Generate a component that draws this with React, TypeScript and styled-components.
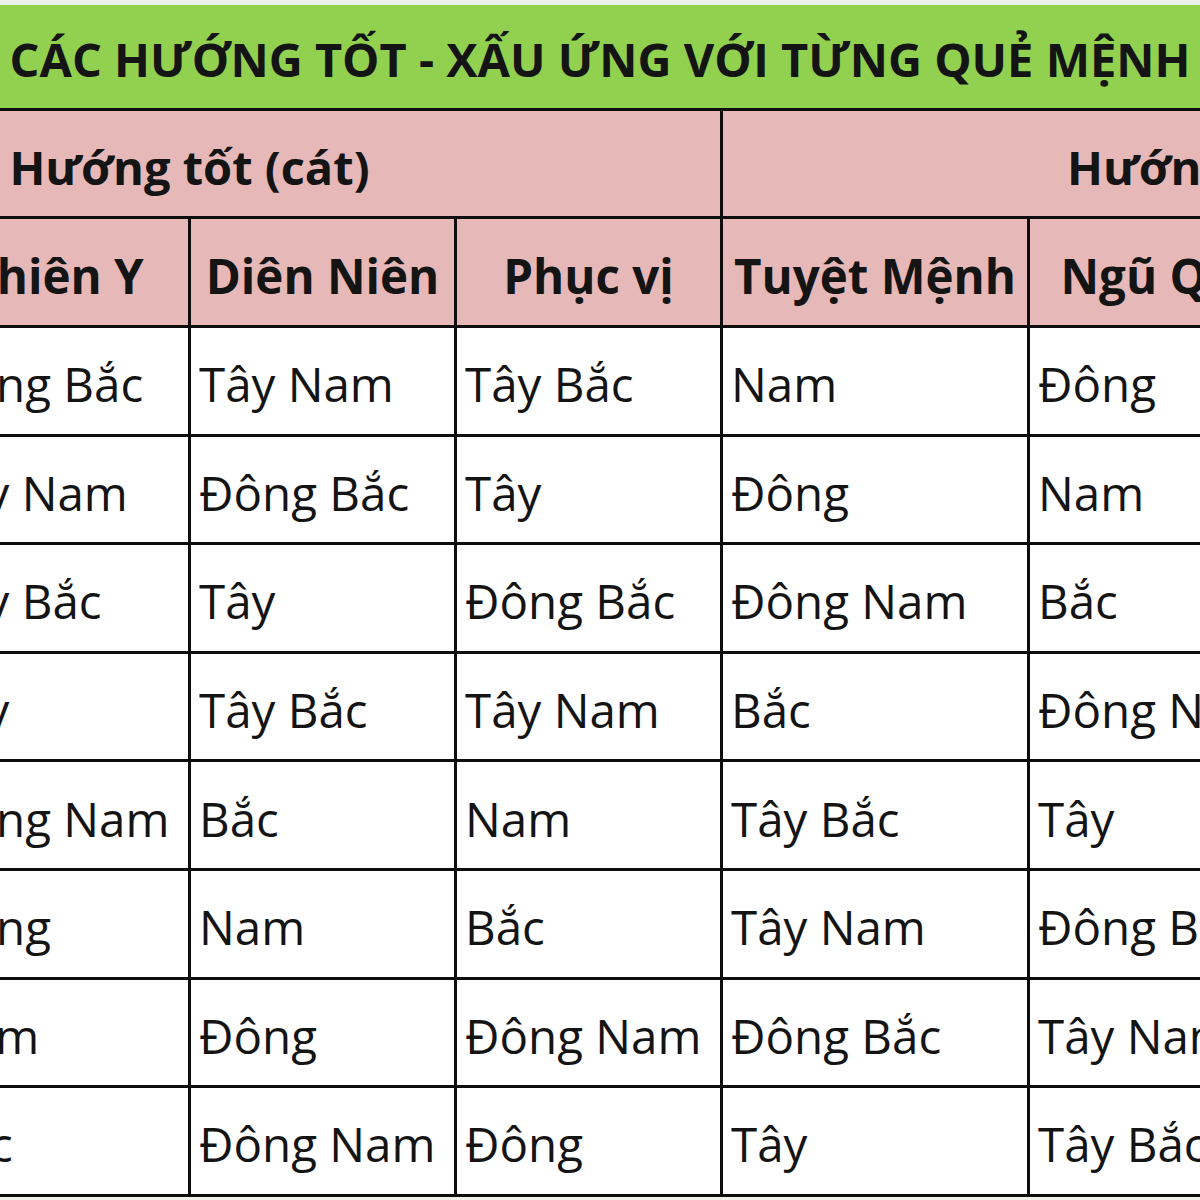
import styled, { createGlobalStyle } from 'styled-components';

const GlobalStyle = createGlobalStyle`
  html, body {
    margin: 0;
    padding: 0;
    background: #ffffff;
  }
  body {
    font-family: "Open Sans", "Noto Sans", "Liberation Sans", sans-serif;
    color: #141414;
  }
`;

const GREEN = '#92d050';
const PINK = '#e6b8b7';
const LINE = '#0d0d0d';

const Page = styled.div`
  padding-top: 5px;
  background: #eef0ec;
  width: 1200px;
  height: 1200px;
  overflow: hidden;
`;

const Sheet = styled.div`
  width: 100%;
  overflow: hidden;
  background: #ffffff;
`;

const TitleBar = styled.div`
  height: 106px;
  display: flex;
  align-items: center;
  justify-content: center;
  padding-top: 4px;
  box-sizing: border-box;
  background: ${GREEN};
  border-bottom: 3px solid ${LINE};
  font-size: 47px;
  font-weight: 700;
  white-space: nowrap;
`;

const Grid = styled.div`
  display: grid;
  grid-template-columns: 263px 263px 263px 263px 304px 266px 266px 266px;
  grid-template-rows: 105px 106px;
  grid-auto-rows: 105.6px;
  gap: 3px;
  width: max-content;
  margin-left: -341px;
  padding-bottom: 3px;
  background: ${LINE};
`;

const GroupCell = styled.div<{ $span: string }>`
  grid-column: ${(p) => p.$span};
  display: flex;
  align-items: center;
  justify-content: center;
  padding-top: 6px;
  background: ${PINK};
  font-size: 47px;
  font-weight: 700;
  white-space: nowrap;
`;

const HeadCell = styled.div`
  display: flex;
  align-items: center;
  justify-content: center;
  padding-top: 6px;
  background: ${PINK};
  font-size: 47.5px;
  font-weight: 700;
  white-space: nowrap;
`;

const DataCell = styled.div`
  display: flex;
  align-items: center;
  padding: 6px 0 0 8px;
  background: #ffffff;
  font-size: 47.5px;
  white-space: nowrap;
`;

const headers = [
  'Sinh Khí',
  'Thiên Y',
  'Diên Niên',
  'Phục vị',
  'Tuyệt Mệnh',
  'Ngũ Quỷ',
  'Lục Sát',
  'Họa Hại',
];

const rows = [
  ['Tây', 'Đông Bắc', 'Tây Nam', 'Tây Bắc', 'Nam', 'Đông', 'Bắc', 'Đông Nam'],
  ['Tây Bắc', 'Tây Nam', 'Đông Bắc', 'Tây', 'Đông', 'Nam', 'Đông Nam', 'Bắc'],
  ['Tây Nam', 'Tây Bắc', 'Tây', 'Đông Bắc', 'Đông Nam', 'Bắc', 'Đông', 'Nam'],
  ['Đông Bắc', 'Tây', 'Tây Bắc', 'Tây Nam', 'Bắc', 'Đông Nam', 'Nam', 'Đông'],
  ['Đông', 'Đông Nam', 'Bắc', 'Nam', 'Tây Bắc', 'Tây', 'Tây Nam', 'Đông Bắc'],
  ['Đông Nam', 'Đông', 'Nam', 'Bắc', 'Tây Nam', 'Đông Bắc', 'Tây Bắc', 'Tây'],
  ['Bắc', 'Nam', 'Đông', 'Đông Nam', 'Đông Bắc', 'Tây Nam', 'Tây', 'Tây Bắc'],
  ['Nam', 'Bắc', 'Đông Nam', 'Đông', 'Tây', 'Tây Bắc', 'Đông Bắc', 'Tây Nam'],
];

export default function App() {
  return (
    <>
      <GlobalStyle />
      <Page>
        <Sheet>
          <TitleBar>CÁC HƯỚNG TỐT - XẤU ỨNG VỚI TỪNG QUẺ MỆNH</TitleBar>
          <Grid>
            <GroupCell $span="1 / 5">Hướng tốt (cát)</GroupCell>
            <GroupCell $span="5 / 9">Hướng xấu (hung)</GroupCell>
            {headers.map((h) => (
              <HeadCell key={h}>{h}</HeadCell>
            ))}
            {rows.map((row, r) =>
              row.map((value, c) => <DataCell key={`${r}-${c}`}>{value}</DataCell>),
            )}
          </Grid>
        </Sheet>
      </Page>
    </>
  );
}
